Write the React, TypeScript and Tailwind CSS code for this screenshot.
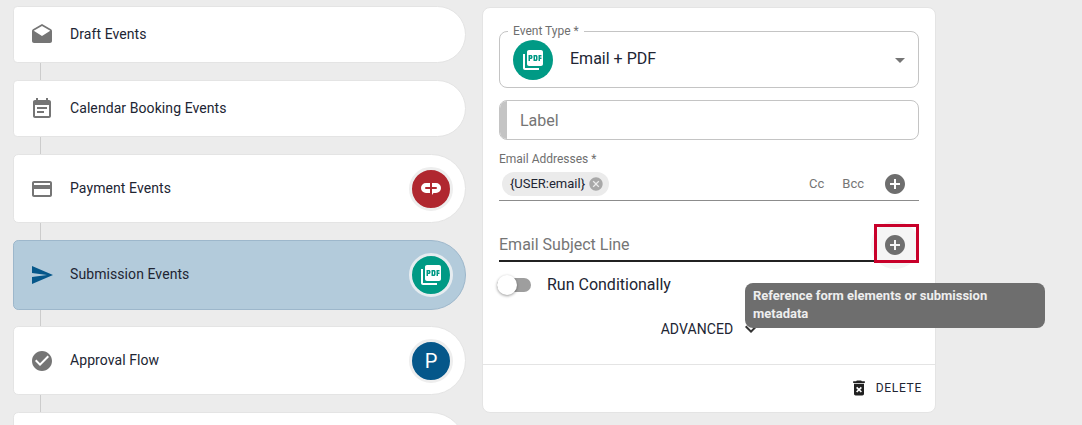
import React from 'react';

const paths = {
    drafts: 'M21.99 8c0-.72-.37-1.35-.94-1.7L12 1 2.95 6.3C2.38 6.65 2 7.28 2 8v10c0 1.1.9 2 2 2h16c1.1 0 2-.9 2-2l-.01-10zM12 13L3.74 7.84 12 3l8.26 4.84L12 13z',
    eventNote: 'M17 10H7v2h10v-2zm2-7h-1V1h-2v2H8V1H6v2H5c-1.11 0-1.99.9-1.99 2L3 19c0 1.1.89 2 2 2h14c1.1 0 2-.9 2-2V5c0-1.1-.9-2-2-2zm0 16H5V8h14v11zm-5-5H7v2h7v-2z',
    card: 'M20 4H4c-1.11 0-1.99.89-1.99 2L2 18c0 1.11.89 2 2 2h16c1.11 0 2-.89 2-2V6c0-1.11-.89-2-2-2zm0 14H4v-6h16v6zm0-10H4V6h16v2z',
    send: 'M2.01 21L23 12 2.01 3 2 10l15 2-15 2z',
    check: 'M12 2C6.48 2 2 6.48 2 12s4.48 10 10 10 10-4.48 10-10S17.52 2 12 2zm-2 15l-5-5 1.41-1.41L10 14.17l7.59-7.59L19 8l-9 9z',
    pdf: 'M20 2H8c-1.1 0-2 .9-2 2v12c0 1.1.9 2 2 2h12c1.1 0 2-.9 2-2V4c0-1.1-.9-2-2-2zm-8.5 7.5c0 .83-.67 1.5-1.5 1.5H9v2H7.5V7H10c.83 0 1.5.67 1.5 1.5v1zm5 2c0 .83-.67 1.5-1.5 1.5h-2.5V7H15c.83 0 1.5.67 1.5 1.5v3zm4-3H19v1h1.5V11H19v2h-1.5V7h3v1.5zM9 9.5h1v-1H9v1zM4 6H2v14c0 1.1.9 2 2 2h14v-2H4V6zm10 5.5h1v-3h-1v3z',
    trash: 'M6 19c0 1.1.9 2 2 2h8c1.1 0 2-.9 2-2V7H6v12zm2.46-7.12l1.41-1.41L12 12.59l2.12-2.12 1.41 1.41L13.41 14l2.12 2.12-1.41 1.41L12 15.41l-2.12 2.12-1.41-1.41L10.59 14l-2.13-2.12zM15.5 4l-1-1h-5l-1 1H5v2h14V4z',
    add: 'M12 2C6.48 2 2 6.48 2 12s4.48 10 10 10 10-4.48 10-10S17.52 2 12 2zm5 11h-4v4h-2v-4H7v-2h4V7h2v4h4v2z',
    cancel: 'M12 2C6.47 2 2 6.47 2 12s4.47 10 10 10 10-4.47 10-10S17.53 2 12 2zm5 13.59L15.59 17 12 13.41 8.41 17 7 15.59 10.59 12 7 8.41 8.41 7 12 10.59 15.59 7 17 8.41 13.41 12 17 15.59z',
    expand: 'M16.59 8.59L12 13.17 7.41 8.59 6 10l6 6 6-6z',
    dropDown: 'M7 10l5 5 5-5z',
};

const Icon: React.FC<{ d: string; className?: string }> = ({ d, className }) => (
    <svg viewBox="0 0 24 24" fill="currentColor" className={className}><path d={d} /></svg>
);

const StepBadge: React.FC<{ children: React.ReactNode; className: string }> = ({ children, className }) => (
    <div className={`flex h-[44px] w-[44px] items-center justify-center rounded-full border-[3px] ${className}`}>
        {children}
    </div>
);

const Connector: React.FC<{ short?: boolean }> = ({ short }) => (
    <div className={`ml-[27px] w-px shrink-0 bg-[#cccccc] ${short ? 'h-[16px]' : 'h-[17px]'}`} />
);

const StepCard: React.FC<{
    label: string;
    icon: string;
    active?: boolean;
    heightClass: string;
    badge?: React.ReactNode;
}> = ({ label, icon, active, heightClass, badge }) => (
    <div className={`flex shrink-0 items-center rounded-l-[6px] rounded-r-[40px] border pl-[16px] pr-[12px] ${heightClass} ${active ? 'border-[#9db7cb] bg-[#b3cbdb]' : 'border-[#e4e4e4] bg-white'}`}>
        <Icon d={icon} className={`h-6 w-6 ${active ? 'text-[#05578a]' : 'text-[#757575]'}`} />
        <span className="ml-[16px] mb-[1px] flex-1 text-[14px] font-[450] tracking-[0.08px] text-[#212533]">{label}</span>
        {badge}
    </div>
);

const App: React.FC = () => {
    return (
        <div className="flex h-[425px] w-[1082px] overflow-hidden bg-[#ececec] font-['Roboto',sans-serif]">
            {/* Step list */}
            <div className="ml-[13px] flex w-[453px] flex-col pt-[6px]">
                <StepCard label="Draft Events" icon={paths.drafts} heightClass="h-[57px]" />
                <Connector />
                <StepCard label="Calendar Booking Events" icon={paths.eventNote} heightClass="h-[57px]" />
                <Connector />
                <StepCard
                    label="Payment Events"
                    icon={paths.card}
                    heightClass="h-[69px]"
                    badge={
                        <StepBadge className="border-[#eeeeee] bg-[#b0272f]">
                            <svg viewBox="0 0 22 16" className="mt-[1px] h-[16px] w-[22px]" fill="none" stroke="white" strokeWidth="4">
                                <path d="M10 4H6a3 3 0 0 0 0 6h4" />
                                <path d="M12 4h4a3 3 0 0 1 0 6h-4" />
                                <path d="M12 10h3l-3 4z" fill="white" stroke="none" />
                            </svg>
                        </StepBadge>
                    }
                />
                <Connector />
                <StepCard
                    label="Submission Events"
                    icon={paths.send}
                    active
                    heightClass="h-[70px]"
                    badge={
                        <StepBadge className="border-[#e6ecf0] bg-[#009a85]">
                            <Icon d={paths.pdf} className="h-6 w-6 text-white" />
                        </StepBadge>
                    }
                />
                <Connector short />
                <StepCard
                    label="Approval Flow"
                    icon={paths.check}
                    heightClass="h-[69px]"
                    badge={
                        <StepBadge className="border-[#eeeeee] bg-[#05578a]">
                            <span className="text-[20px] text-white">P</span>
                        </StepBadge>
                    }
                />
                <Connector />
                <div className="h-[70px] shrink-0 rounded-l-[6px] rounded-r-[40px] border border-[#e4e4e4] bg-white" />
            </div>

            {/* Event editor */}
            <div className="relative ml-[16px] mt-[7px] flex h-[406px] w-[454px] flex-col rounded-[8px] border border-[#e4e4e4] bg-white">
                <div className="flex-1 px-[16px] pt-[23px]">
                    <div className="relative flex h-[57px] items-center rounded-[8px] border border-[#c4c4c4] px-[13px]">
                        <span className="absolute -top-[8px] left-[8px] bg-white px-[5px] text-[12px] leading-[14px] text-[#6f6f6f]">Event Type *</span>
                        <div className="flex h-[40px] w-[40px] items-center justify-center rounded-full bg-[#009a85]">
                            <Icon d={paths.pdf} className="h-6 w-6 text-white" />
                        </div>
                        <span className="mb-[1px] ml-[17px] flex-1 text-[16px] text-[#212533]">Email + PDF</span>
                        <Icon d={paths.dropDown} className="mr-[-7px] mt-[1px] h-6 w-6 text-[#757575]" />
                    </div>

                    <div className="mt-[12px] flex h-[40px] items-center overflow-hidden rounded-[8px] border border-[#c4c4c4]">
                        <div className="h-full w-[7px] bg-[#c4c4c4]" />
                        <span className="ml-[13px] mt-[1px] text-[16px] text-[#757575]">Label</span>
                    </div>

                    <div className="mt-[12px] text-[12px] leading-[14px] text-[#6f6f6f]">Email Addresses *</div>
                    <div className="mt-[6px] flex h-[29px] items-start border-b border-[#8c8c8c]">
                        <div className="ml-[3px] flex h-[24px] items-center rounded-full bg-[#ebebeb] pl-[8px] pr-[5px]">
                            <span className="text-[13px] text-[#212533]">{'{USER:email}'}</span>
                            <Icon d={paths.cancel} className="ml-[3px] h-[16px] w-[16px] text-[#a8a8a8]" />
                        </div>
                        <span className="ml-auto mt-[3px] text-[13px] leading-[18px] text-[#757575]">Cc</span>
                        <span className="ml-[18px] mt-[3px] text-[13px] leading-[18px] text-[#757575]">Bcc</span>
                        <Icon d={paths.add} className="ml-[19px] mr-[12px] h-6 w-6 text-[#6e6e6e]" />
                    </div>

                    <div className="relative mt-[23px] flex h-[38px] items-center justify-between border-b-2 border-[#212121]">
                        <span className="mt-[5px] text-[16px] text-[#757575]">Email Subject Line</span>
                        <div className="relative mr-[12px] mt-[5px] flex h-[24px] w-[24px] items-center justify-center">
                            <div className="absolute left-[-12px] top-[-12px] h-[48px] w-[48px] rounded-full bg-[#f5f5f5]" />
                            <Icon d={paths.add} className="relative h-6 w-6 text-[#6e6e6e]" />
                        </div>
                        <div className="absolute -bottom-[3px] right-0 h-[39px] w-[45px] border-[3px] border-[#c8002a]" />
                    </div>

                    <div className="mt-[11px] flex h-[24px] items-center">
                        <div className="relative ml-[-2px] h-[14px] w-[34px] rounded-full bg-[#9e9e9e]">
                            <div className="absolute -top-[3px] left-0 h-[20px] w-[20px] rounded-full bg-white shadow-[0_1px_3px_rgba(0,0,0,0.4)]" />
                        </div>
                        <span className="ml-[16px] text-[16px] text-[#212533]">Run Conditionally</span>
                    </div>

                    <div className="mt-[20px] flex items-center justify-center pl-[6px]">
                        <span className="text-[14px] font-[450] tracking-[0.1px] text-[#212533]">ADVANCED</span>
                        <Icon d={paths.expand} className="ml-[6px] h-6 w-6 text-[#333333]" />
                    </div>
                </div>

                <div className="flex h-[48px] items-center justify-end border-t border-[#e4e4e4] pr-[13px]">
                    <Icon d={paths.trash} className="mb-[1px] h-[20px] w-[20px] text-[#212121]" />
                    <span className="mb-[1px] ml-[7px] text-[12px] font-[450] tracking-[0.7px] text-[#212533]">DELETE</span>
                </div>

                <div className="absolute left-[262px] top-[275px] w-[300px] rounded-[8px] bg-[#6e6e6e] px-[8px] pb-[5px] pt-[4px] text-[13px] font-bold leading-[18px] text-[#eeeeee]">
                    Reference form elements or submission metadata
                </div>
            </div>
        </div>
    );
};

export default App;
